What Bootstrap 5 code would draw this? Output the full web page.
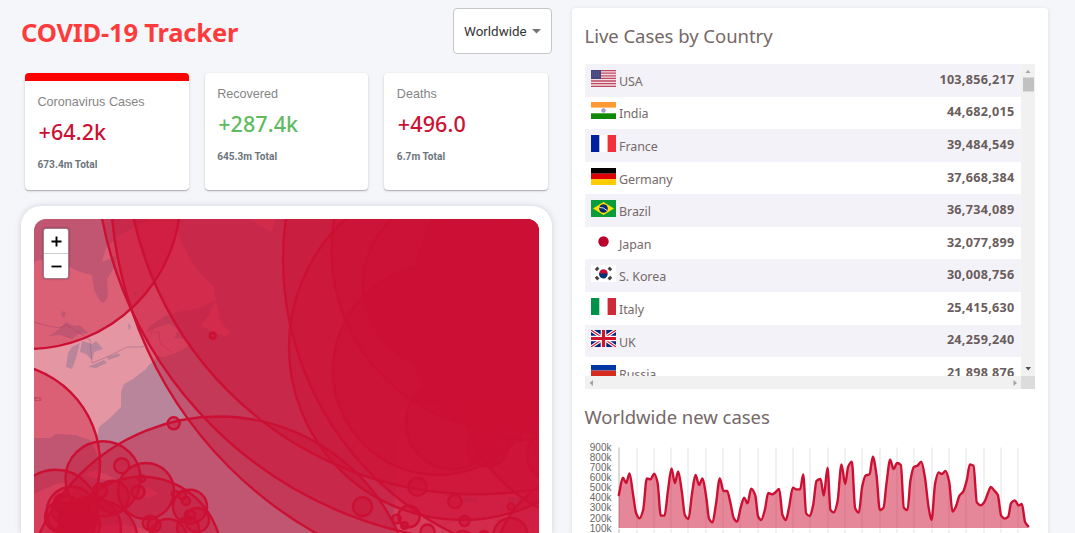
<!DOCTYPE html>
<html lang="en">
<head>
<meta charset="utf-8">
<meta name="viewport" content="width=device-width, initial-scale=1">
<title>COVID-19 Tracker</title>
<link href="https://cdn.jsdelivr.net/npm/bootstrap@5.3.0/dist/css/bootstrap.min.css" rel="stylesheet">
<style>
html,body{height:533px;overflow:hidden}
body{background:#f5f6fa;font-family:"Noto Sans",sans-serif;color:#6a5d5d}
.app{height:533px;padding-left:21px;gap:20px;overflow:hidden}
.app-left{width:531px;flex:none}
.app-right{width:476px;height:525px;margin-top:8px;padding:0 12.5px;border-radius:4px 4px 0 0;box-shadow:0 1px 4px rgba(60,60,90,.14);flex:none}
.app-header{height:46px;margin-top:8px}
.app-title{font-size:25.5px;font-weight:700;color:#fc3c3c;line-height:49px;white-space:nowrap;letter-spacing:-.18px}
.region-select{width:99px;height:46px;border:1px solid #c6c7ca;border-radius:4px;background:#fff;font:13.4px Roboto,sans-serif;color:#333;padding:0 10px}
.stats{margin-top:19px;padding:0 4px;gap:16px}
.stat{width:164px;height:117px;background:#fff;border-radius:4px;box-shadow:0 1px 1px rgba(0,0,0,.2),0 1px 3px rgba(0,0,0,.14);padding:13px 12.5px}
.stat-active{border-top:8px solid red}
.stat-name{font:12.6px/17px "Liberation Sans",sans-serif;color:#858585;letter-spacing:0}
.stat-new{font-size:21.5px;line-height:29px;font-weight:500;color:#cc1034;margin:6px 0 0 1px;letter-spacing:.1px}
.stat-new.ok{color:#5fbb60}
.stat-total{font:700 10.1px/14px Roboto,sans-serif;color:#6c757d;margin-top:12px;letter-spacing:.02px}
.map-card{margin-top:16px;height:327px;padding:13px 13px 0;border-radius:20px 20px 0 0;background:#fff;box-shadow:0 0 6px rgba(80,80,110,.22)}
.map-box{position:relative;width:505px;height:314px;border-radius:12px 12px 0 0;overflow:hidden}
.zoom-ctl{position:absolute;left:9px;top:9px;width:26px;height:51px;border:1px solid rgba(80,20,50,.55);border-radius:3px;background:#fff;box-shadow:0 0 2px rgba(60,0,30,.5)}
.zoom-ctl div{height:24px}
.zoom-ctl div+div{border-top:1px solid #ccc;height:25px}
.section-title{font-size:18.5px;line-height:26px;font-weight:400;margin:0;white-space:nowrap;color:#746868;letter-spacing:-.04px}
.live-title{padding-top:14.5px}
.list-box{margin-top:15.500px;width:450.5px;display:grid;grid-template-columns:436.5px 14px;grid-template-rows:312px 13px}
.country-list{overflow:hidden}
.country{height:32.58px;padding:0 6.500px;font-size:12.5px;color:#766a6a}
.country:nth-child(odd){background:#f3f2f8}
.country svg{width:25px;height:17px;margin-bottom:4px;flex:none}
.country span{margin-left:3px;position:relative;top:2px;letter-spacing:-.08px}
.country strong{margin-left:auto;font-size:12.6px;font-weight:700;color:#6a5d5d;letter-spacing:.28px}
.bar-bg{background:#f1f1f1}
.scroll-corner{background:#dcdcdc}
.chart-title{margin-top:15px}
</style>
</head>
<body>
<div class="app d-flex">
 <main class="app-left">
  <header class="app-header d-flex justify-content-between">
   <h1 class="app-title m-0">COVID-19 Tracker</h1>
   <div class="region-select d-flex align-items-center justify-content-between"><span>Worldwide</span><svg width="9" height="5"><path d="M0 0h9L4.500 4.500z" fill="#757575"/></svg></div>
  </header>
  <section class="stats d-flex justify-content-between">
   <div class="stat stat-active"><div class="stat-name">Coronavirus Cases</div><div class="stat-new">+64.2k</div><div class="stat-total">673.4m Total</div></div>
   <div class="stat"><div class="stat-name">Recovered</div><div class="stat-new ok">+287.4k</div><div class="stat-total">645.3m Total</div></div>
   <div class="stat"><div class="stat-name">Deaths</div><div class="stat-new">+496.0</div><div class="stat-total">6.7m Total</div></div>
  </section>
  <section class="map-card">
   <div class="map-box">
    <svg width="505" height="314" viewBox="34 219 505 314" class="d-block">
     <rect x="34" y="219" width="505" height="314" fill="#b8859a"/>
     <g fill="#e497a2">
      <path d="M34 262L40 260 68 266 80 272 92 275 94 290 100 301 104 303 108 296 107 279 115 266 116 256 102 262 106 248 120 235 150 219 176 219 180 240 192 262 202 275 214 287 216 300 200 308 178 312 165 316 150 326 146 333 158 327 170 324 178 330 174 338 184 339 190 345 178 352 164 357 158 356 148 366 146 369 133 379 124 384 121 392 121 407 110 418 99 427 97 438 101 450 100 462 96 452 90 440 76 435 56 434 50 438 34 438Z"/>
      <path d="M207 318L216 300 220 320 230 333 226 336 214 332 200 326Z"/>
      <path d="M34 494L56 484 68 482 76 494 60 506 60 520 78 540 34 540Z"/>
      <path d="M84 474L96 470 112 477 122 482 108 480 92 478ZM130 490L150 488 160 494 148 498 132 496Z"/>
      <path d="M60 540L90 528 120 524 150 530 170 579 60 579Z"/>
      <path d="M400 410L460 400 539 400 539 579 430 579 396 540 394 510 396 480Z"/>
      <path d="M250 219L275 219 272 232 264 228Z"/>
     </g>
     <g fill="#b8859a"><path d="M48 336L54 333 60 328 66 322 74 326 80 325 88 333 78 334 72 339 60 335ZM72 347L80 343 76 358 72 369 66 367 68 353ZM82 341L92 344 96 341 103 349 94 352 92 360 86 354 80 352ZM88 367L104 360 107 363 96 368ZM107 357L119 353 120 356 108 360ZM62 311l4 2-2 5-3-3ZM133 291l5 3-4 2ZM128 323l3 3-2 5Z"/></g>
     <g fill="none" stroke="#a06486" stroke-width=".8" opacity=".7"><path d="M34 322L48 326 60 328 66 325 78 332 90 340 92 363 107 357 127 347 143 347 152 332 159 332 160 343 172 352M415 483h30v12h30M465 524l18-8 15 5 6-18M440 540l5-16 20-6"/></g>
     <g id="circles" fill="#cc1034" fill-opacity=".4" stroke="#cc1034" stroke-width="2.4"></g>
     <g font-family="Noto Sans, sans-serif" fill="#8e2146" opacity=".55"><text x="34" y="401" font-size="7">es</text><text x="463" y="502" font-size="7.500" opacity=".5">Mali</text><text x="508" y="502" font-size="7.500" opacity=".5">Nig</text></g>
    </svg>
    <div class="zoom-ctl">
     <div class="d-flex align-items-center justify-content-center"><svg width="11" height="11"><path d="M5.500 .5v10M.5 5.500h10" stroke="#000" stroke-width="1.900"/></svg></div>
     <div class="d-flex align-items-center justify-content-center"><svg width="11" height="3"><path d="M.5 1.500h10" stroke="#000" stroke-width="1.800"/></svg></div>
    </div>
   </div>
  </section>
 </main>
 <aside class="app-right bg-white">
  <h2 class="section-title live-title">Live Cases by Country</h2>
  <div class="list-box">
   <div class="country-list">
    <div class="country d-flex align-items-center"><svg viewBox="0 0 25 17"><path fill="#f4dfe4" d="M0 0h25v17H0z"/><path stroke="#c04860" stroke-width="1.300" d="M0 .6h25M0 3.200h25M0 5.800h25M0 8.400h25M0 11h25M0 13.600h25M0 16.300h25"/><path fill="#46467f" d="M0 0h10v9H0z"/><path stroke="#7775a0" stroke-width=".6" stroke-dasharray="1 1" d="M1 2h8M1 4h8M1 6h8"/></svg><span>USA</span><strong>103,856,217</strong></div>
    <div class="country d-flex align-items-center"><svg viewBox="0 0 25 17"><path fill="#fff" d="M0 0h25v17H0z"/><path fill="#ff9933" d="M0 0h25v5.600H0z"/><path fill="#128807" d="M0 11.300h25V17H0z"/><circle cx="12.500" cy="8.500" r="1.800" fill="#aaaadd" stroke="#7777bb" stroke-width=".7"/></svg><span>India</span><strong>44,682,015</strong></div>
    <div class="country d-flex align-items-center"><svg viewBox="0 0 25 17"><path fill="#fff" d="M0 0h25v17H0z"/><path fill="#00209f" d="M0 0h8.300v17H0z"/><path fill="#f22f3d" d="M16.600 0H25v17h-8.400z"/></svg><span>France</span><strong>39,484,549</strong></div>
    <div class="country d-flex align-items-center"><svg viewBox="0 0 25 17"><path d="M0 0h25v5.700H0z"/><path fill="#d00" d="M0 5.600h25v5.800H0z"/><path fill="#fc0" d="M0 11.200h25V17H0z"/></svg><span>Germany</span><strong>37,668,384</strong></div>
    <div class="country d-flex align-items-center"><svg viewBox="0 0 25 17"><path fill="#0a9b3a" d="M0 0h25v17H0z"/><path fill="#fedf00" d="M2 8.500L12.500 2 23 8.500 12.500 15z"/><circle cx="12.500" cy="8.500" r="4.300" fill="#002776"/><path d="M8.500 7.500q4-.5 7.500 3" fill="none" stroke="#dfe8ee"/></svg><span>Brazil</span><strong>36,734,089</strong></div>
    <div class="country d-flex align-items-center"><svg viewBox="0 0 25 17"><path fill="#fff" d="M0 0h25v17H0z"/><circle cx="12.500" cy="8.500" r="5.200" fill="#bc002d"/></svg><span>Japan</span><strong>32,077,899</strong></div>
    <div class="country d-flex align-items-center"><svg viewBox="0 0 25 17"><path fill="#fff" d="M0 0h25v17H0z"/><circle cx="12.500" cy="8.500" r="4.200" fill="#c60c30"/><path fill="#003478" d="M8.500 7.500a4.200 4.200 0 1 0 8 2q-1-2-4-1t-4-1z"/><path stroke="#444" stroke-width="3" d="M4.800 5.200l2.600-2.600M17.600 2.600l2.600 2.600M4.800 11.800l2.600 2.600M17.600 14.400l2.600-2.600"/></svg><span>S. Korea</span><strong>30,008,756</strong></div>
    <div class="country d-flex align-items-center"><svg viewBox="0 0 25 17"><path fill="#fff" d="M0 0h25v17H0z"/><path fill="#009246" d="M0 0h8.300v17H0z"/><path fill="#ce2b37" d="M16.600 0H25v17h-8.400z"/></svg><span>Italy</span><strong>25,415,630</strong></div>
    <div class="country d-flex align-items-center"><svg viewBox="0 0 25 17"><path fill="#00247d" d="M0 0h25v17H0z"/><path stroke="#fff" stroke-width="3.400" d="M0 0l25 17M25 0L0 17"/><path stroke="#cf142b" stroke-width="1.100" d="M0 0l25 17M25 0L0 17"/><path stroke="#fff" stroke-width="5.600" d="M12.500 0v17M0 8.500h25"/><path stroke="#cf142b" stroke-width="3.200" d="M12.500 0v17M0 8.500h25"/></svg><span>UK</span><strong>24,259,240</strong></div>
    <div class="country d-flex align-items-center"><svg viewBox="0 0 25 17"><path fill="#fff" d="M0 0h25v17H0z"/><path fill="#0039a6" d="M0 2h25v5.500H0z"/><path fill="#d52b1e" d="M0 7.500h25V17H0z"/></svg><span>Russia</span><strong>21,898,876</strong></div>
   </div>
   <svg class="bar-bg" width="14" height="312"><path fill="#a3a3a3" d="M4.500 9h5L7 6z"/><path fill="#c1c1c1" d="M2 13.500h11v14H2z"/><path fill="#505050" d="M4.500 303h5.500L7.200 306.500z"/></svg>
   <svg class="bar-bg" width="436.5" height="13"><path fill="#a3a3a3" d="M8 4v6L4.500 7zM428.500 4v6L432 7z"/></svg>
   <div class="scroll-corner"></div>
  </div>
  <h2 class="section-title chart-title">Worldwide new cases</h2>
  <svg id="chart" class="d-block" width="451" height="103" viewBox="584.5 430 451 103"></svg>
 </aside>
</div>
<script src="https://cdn.jsdelivr.net/npm/bootstrap@5.3.0/dist/js/bootstrap.bundle.min.js"></script>
<script>
// Case circles: centre x, centre y, radius
const circles=[[27.7,196,153],[0,463,100],[219,612.5,196],[494,143.4,399],[515.4,180.6,405],[477,142.8,351.5],[588.6,259.3,305.5],[462,347,173],[511,250.6,179.5],[438,370,105],[450,284,87],[452,423,46],[488,446,20],[606,376,148],[600,575,108],[552,455,25],[520,330,110],[560,290,145],
[362.5,506.7,9.5],[409,516.5,10.7],[396.5,519,4.3],[404.5,525.5,3.3],[427.5,531.5,7],[417.5,486.7,9],[455,501.5,6.7],[464.5,521,5],[511,506.7,3.3],[510.5,535,17],[463,541,10],[484,536,5],[212.7,335.7,3],[173.7,423.3,6],
[103,478.7,37.5],[121.7,465.7,7.5],[146,491,28],[100,490.7,7],[138,492,6.5],[142,478.7,3.2],[55.7,511.7,42],[141.7,556.7,80],[71.7,511.7,25],[112.7,496.7,16],[90,528,31],[96.7,541,41],[190,506.7,17],[197,520,12],[190,515,5],[188,528,11],[168,538,19],[150,523,7.2],[154,525,6.6],[175,494,3],[182,495,4],[186,501,4],[60,517,15],[66,510,14],[76,518,17],[63,503,9],[82,525,18]];
document.getElementById('circles').innerHTML=circles.map(c=>`<circle cx="${c[0]}" cy="${c[1]}" r="${c[2]}"/>`).join('');

// Daily new cases, drawn as a monotone cubic line over a filled area
const a=[130,300,142,248,152,264,162,235,173,300,182,355,192,370,203,345,214,250,225,253,236,236,246,262,256,362,267,362,277,290,288,220,298,264,308,229,319,290,328,360,339,372,349,300,360,240,371,270,381,250,392,305,401,372,411,382,421,330,433,250,444,288,455,288,465,325,475,370,485,380,495,340,506,308,516,325,527,281,539,300,548,365,557,375,568,345,578,294,590,298,600,292,611,282,621,360,631,375,641,335,652,278,662,283,674,283,683,238,692,355,703,363];
const b=[8,330,18,258,30,252,40,302,51,218,60,345,70,352,81,320,93,208,104,267,113,215,124,200,134,340,145,353,155,275,165,242,177,238,187,185,198,240,208,345,219,338,228,265,239,194,249,222,260,204,271,210,280,338,291,345,300,255,310,216,321,212,332,200,343,245,354,335,363,375,374,265,384,232,394,237,405,228,416,260,426,350,436,335,447,302,458,290,469,255,478,208,489,212,499,322,511,331,521,322,532,295,541,276,551,286,562,300,572,362,583,371,593,365,602,324,613,316,624,331,634,327,644,382,653,394];
const p=[];
for(let i=0;i<a.length;i+=2)p.push([575+a[i]/3,395+a[i+1]/3]);
for(let i=0;i<b.length;i+=2)p.push([810+b[i]/3,395+b[i+1]/3]);
const s=p.slice(1).map((q,i)=>(q[1]-p[i][1])/(q[0]-p[i][0]));
const m=p.map((q,i)=>i==0?s[0]:i==s.length?s[i-1]:s[i-1]*s[i]<=0?0:2*s[i-1]*s[i]/(s[i-1]+s[i]));
let d='M'+p[0];
for(let i=1;i<p.length;i++){const h=(p[i][0]-p[i-1][0])/3;d+='C'+[p[i-1][0]+h,p[i-1][1]+m[i-1]*h,p[i][0]-h,p[i][1]-m[i]*h,p[i][0],p[i][1]]}
let out='';
[618.5,636.5,653.5,670.5,687.5,705.5,722.5,739.5,757.5,775.5,792.5,809.5,827.5,844.5,861.5,879.5,896.5,913.5,931.5,948.5,965.5,983.5,1000.5,1017.5].forEach((x,i)=>out+=`<path d="M${x} 447.500V528M${x} 529V533" stroke="${i?'#e3e3e3':'#b5b5b5'}"/>`);
out+=`<path d="${d}V528H618.300Z" fill="#cc1034" fill-opacity=".5"/><path d="${d}" fill="none" stroke="#cc1034" stroke-width="2.400" stroke-linejoin="round" stroke-linecap="round"/>`;
for(let i=0;i<9;i++)out+=`<text x="611" y="${451+i*10.08}" text-anchor="end" font-family="Liberation Sans, sans-serif" font-size="10" fill="#666">${9-i}00k</text>`;
document.getElementById('chart').innerHTML=out;
</script>
</body>
</html>
